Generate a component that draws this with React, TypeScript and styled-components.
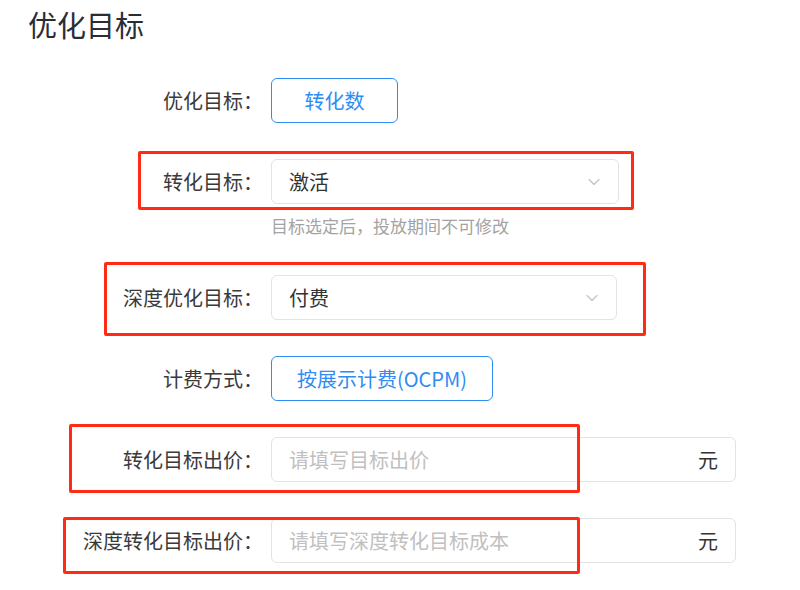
import styled, { createGlobalStyle } from "styled-components"
import { ChevronDown } from "lucide-react"

const GlobalStyle = createGlobalStyle`
  html, body {
    margin: 0;
    padding: 0;
    background: #ffffff;
  }
  body {
    font-family: "Noto Sans CJK SC", "Noto Sans", sans-serif;
  }
`

type Box = { x: number, y: number, w: number, h: number }

const highlights: Box[] = [
  { x: 138, y: 151, w: 496, h: 59 },
  { x: 104, y: 262, w: 542, h: 74 },
  { x: 69, y: 424, w: 511, h: 69 },
  { x: 63, y: 517, w: 517, h: 57 },
]

export default function App() {
  return (
    <>
      <GlobalStyle />
      <Page>
        <Title>优化目标</Title>
        <Form>
          <Row>
            <Label>优化目标：</Label>
            <Control>
              <OptionButton $minWidth={127}>转化数</OptionButton>
            </Control>
          </Row>

          <Row>
            <Label>转化目标：</Label>
            <Control>
              <Select $width={348}>
                <span>激活</span>
                <ChevronDown size={20} strokeWidth={1.4} color="#c2c2c2" />
              </Select>
              <Helper>目标选定后，投放期间不可修改</Helper>
            </Control>
          </Row>

          <Row>
            <Label>深度优化目标：</Label>
            <Control>
              <Select $width={346}>
                <span>付费</span>
                <ChevronDown size={20} strokeWidth={1.4} color="#c2c2c2" />
              </Select>
            </Control>
          </Row>

          <Row>
            <Label>计费方式：</Label>
            <Control>
              <OptionButton>按展示计费(OCPM)</OptionButton>
            </Control>
          </Row>

          <Row>
            <Label>转化目标出价：</Label>
            <Control>
              <InputBox>
                <input placeholder="请填写目标出价" />
                <Suffix>元</Suffix>
              </InputBox>
            </Control>
          </Row>

          <Row>
            <Label>深度转化目标出价：</Label>
            <Control>
              <InputBox>
                <input placeholder="请填写深度转化目标成本" />
                <Suffix>元</Suffix>
              </InputBox>
            </Control>
          </Row>
        </Form>

        {highlights.map((b, i) => (
          <Highlight key={i} style={{ left: b.x, top: b.y, width: b.w, height: b.h }} />
        ))}
      </Page>
    </>
  )
}

const Page = styled.div`
  position: relative;
  box-sizing: border-box;
  width: 800px;
  height: 590px;
  padding: 4px 0 0 28px;
  overflow: hidden;
`

const Title = styled.h1`
  margin: 0;
  font-size: 29px;
  line-height: 40px;
  font-weight: 400;
  color: #2a2d36;
`

const Form = styled.div`
  display: flex;
  flex-direction: column;
  gap: 36px;
  margin-top: 34px;
`

const Row = styled.div`
  display: grid;
  grid-template-columns: 235px 1fr;
  column-gap: 8px;
  align-items: start;
`

const Label = styled.div`
  height: 45px;
  display: flex;
  align-items: center;
  justify-content: flex-end;
  font-size: 20px;
  color: #3a3a3a;
  white-space: nowrap;
`

const Control = styled.div`
  display: flex;
  flex-direction: column;
  align-items: flex-start;
`

const OptionButton = styled.button<{ $minWidth?: number }>`
  box-sizing: border-box;
  height: 45px;
  min-width: ${({ $minWidth }) => ($minWidth ? `${$minWidth}px` : "0")};
  padding: 0 25px;
  border: 1px solid #2f8cf3;
  border-radius: 6px;
  background: #ffffff;
  color: #2f8cf3;
  font-family: inherit;
  font-size: 20px;
  cursor: pointer;
`

const Select = styled.div<{ $width: number }>`
  box-sizing: border-box;
  width: ${({ $width }) => $width}px;
  height: 45px;
  padding: 0 14px 0 17px;
  display: flex;
  align-items: center;
  justify-content: space-between;
  border: 1px solid #e3e3e3;
  border-radius: 6px;
  font-size: 20px;
  color: #333333;
`

const Helper = styled.div`
  margin: 13px 0 4px;
  font-size: 17px;
  line-height: 18px;
  color: #a3a3a3;
`

const InputBox = styled.div`
  box-sizing: border-box;
  width: 465px;
  height: 45px;
  padding: 0 17px;
  display: flex;
  align-items: center;
  border: 1px solid #e3e3e3;
  border-radius: 6px;

  input {
    flex: 1;
    min-width: 0;
    border: none;
    outline: none;
    padding: 0;
    font-family: inherit;
    font-size: 20px;
    color: #333333;
    background: transparent;

    &::placeholder {
      color: #c0c0c0;
    }
  }
`

const Suffix = styled.span`
  font-size: 20px;
  color: #333333;
`

const Highlight = styled.div`
  position: absolute;
  box-sizing: border-box;
  border: 3px solid #ff2b12;
  border-radius: 2px;
  pointer-events: none;
`
